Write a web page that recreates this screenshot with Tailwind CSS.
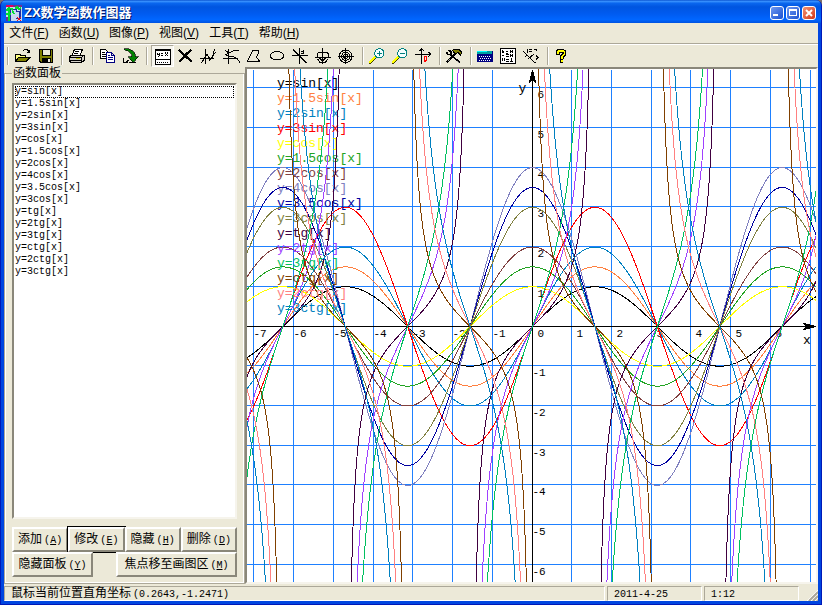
<!DOCTYPE html>
<html lang="zh-CN">
<head>
<meta charset="utf-8">
<title>ZX数学函数作图器</title>
<script src="https://cdn.jsdelivr.net/npm/@tailwindcss/browser@4"></script>
</head>
<body class="h-screen overflow-hidden bg-[#7b6f6a] text-black text-[12px] leading-[14px] font-['Liberation_Sans','Noto_Sans_CJK_SC',sans-serif]">
<div class="h-full flex flex-col bg-[#0046e0] rounded-t-[6px] overflow-hidden border-b border-r border-l border-[#0019b8]">

  <header class="h-[23px] shrink-0 flex items-center pl-[5px] pr-[5px] pt-[3px] bg-linear-[180deg,#0047c8_0%,#3d95ff_5%,#0a66ee_14%,#0055e0_30%,#005bf0_60%,#0066ff_85%,#0052e0_100%]">
    <svg class="w-4 h-4 shrink-0" viewBox="18 15 48 48" shape-rendering="crispEdges" aria-hidden="true">
      <path fill="#c8d8f0" d="M18 15h48v48H18z"/><path fill="#e00060" d="M18 15h21v6H18z"/><path fill="#703090" d="M39 15h27v6H39zM18 51h6v12h-6z"/>
      <path fill="none" stroke="#2030a0" stroke-width="3" d="M30 24v39M39 27h9v6h9v21h-9M60 21v36"/>
      <path fill="none" stroke="#00e030" stroke-width="5" d="M18 42h15M27 21v42M18 33l9-9 9 3 6 15M45 27l6-6 6 6 6-3"/>
      <path fill="none" stroke="#f01020" stroke-width="3" d="M51 51l12 12M63 51L51 63"/>
    </svg>
    <h1 class="flex-1 pl-[2px] text-white font-bold text-[13px] leading-4 [text-shadow:1px_1px_0_#00186b]">ZX数学函数作图器</h1>
    <div class="flex gap-[2px]">
      <button aria-label="最小化" class="w-[14px] h-[14px] rounded-[3px] border border-white bg-linear-to-br from-[#6f98f0] to-[#1a4fd0]"><svg viewBox="0 0 12 12" class="w-3 h-3"><path fill="#fff" d="M2 7h5v2H2z"/></svg></button>
      <button aria-label="最大化" class="w-[14px] h-[14px] rounded-[3px] border border-white bg-linear-to-br from-[#6f98f0] to-[#1a4fd0]"><svg viewBox="0 0 12 12" class="w-3 h-3" shape-rendering="crispEdges"><path fill="#fff" fill-rule="evenodd" d="M2 2h8v7H2zM3 4v4h6V4z"/></svg></button>
      <button aria-label="关闭" class="w-[14px] h-[14px] rounded-[3px] border border-white bg-linear-to-br from-[#f09070] to-[#d03010]"><svg viewBox="0 0 12 12" class="w-3 h-3"><path stroke="#fff" stroke-width="2" d="M3 3l6 6M9 3L3 9"/></svg></button>
    </div>
  </header>

  <div class="flex-1 min-h-0 flex flex-col mx-[3px] mb-[3px] bg-[#ece9d8]">
    <nav class="h-[20px] shrink-0 flex items-center">
      <button class="w-[50px] text-center">文件(<u>F</u>)</button>
      <button class="w-[50px] text-center">函数(<u>U</u>)</button>
      <button class="w-[50px] text-center">图像(<u>P</u>)</button>
      <button class="w-[50px] text-center">视图(<u>V</u>)</button>
      <button class="w-[50px] text-center">工具(<u>T</u>)</button>
      <button class="w-[50px] text-center">帮助(<u>H</u>)</button>
    </nav>
    <div class="h-[2px] shrink-0 bg-[#aca899] border-b border-white"></div>

    <div role="toolbar" aria-label="工具栏" class="h-[22px] shrink-0 flex items-center [&_button]:w-[23px] [&_button]:h-[22px] [&_button]:flex [&_button]:items-center [&_button]:justify-center [&_button]:shrink-0 [&_svg]:w-[19px] [&_svg]:h-[18px] [&_svg]:shrink-0 [&_hr]:w-[2px] [&_hr]:h-[18px] [&_hr]:ml-1 [&_hr]:mr-[2px] [&_hr]:border-0 [&_hr]:border-r [&_hr]:border-white [&_hr]:bg-[#aca899] [&_hr]:shrink-0">
      <hr class="first:ml-[3px]">
      <button aria-label="打开"><svg viewBox="39 141 57 54" shape-rendering="crispEdges"><path fill="#ffff80" stroke="#000" stroke-width="3" d="M46 183v-21h12l3 3h15v6"/><path fill="#808000" stroke="#000" stroke-width="3" d="M46 184l11-13h34l-12 13z"/><path fill="none" stroke="#000" stroke-width="3" d="M69 153l6-5h6l6 6v4M81 157h8v-7"/></svg></button>
      <button aria-label="保存"><svg viewBox="108 141 57 54" shape-rendering="crispEdges"><path fill="#808000" stroke="#000" stroke-width="3" d="M119 149h39v38h-36l-3-3z"/><path fill="#ece9d8" stroke="#000" stroke-width="3" d="M127 149h23v18h-23z"/><path d="M126 174h27v14h-27z"/><path fill="#ece9d8" d="M144 177h6v8h-6z"/></svg></button>
      <hr>
      <button aria-label="打印"><svg viewBox="201 141 57 54" shape-rendering="crispEdges"><path fill="#fff" stroke="#000" stroke-width="3" d="M216 168l7-19h24l-7 19z"/><path stroke="#000" stroke-width="3" d="M226 155h12M223 161h12"/><path fill="#d4d0c8" stroke="#000" stroke-width="3" d="M209 171l6-6h36l3 3v12l-9 7h-33l-3-4z"/><path fill="none" stroke="#000" stroke-width="3" d="M209 172h35v15M244 172l9-6M209 180h35"/><path fill="#c0c000" d="M228 174h12v4h-12z"/></svg></button>
      <hr>
      <button aria-label="复制"><svg viewBox="294 141 57 54" shape-rendering="crispEdges"><path fill="#fff" stroke="#000" stroke-width="3" d="M302 149h15l6 6v21h-21z"/><path stroke="#000" stroke-width="3" d="M306 158h9M306 164h12M306 170h12"/><path fill="#fff" stroke="#000080" stroke-width="3" d="M320 158h15l9 9v19h-24zM334 158v9h9"/><path stroke="#000080" stroke-width="3" d="M324 167h6M324 173h15M324 179h15"/></svg></button>
      <button aria-label="导出"><svg viewBox="363 141 57 54" shape-rendering="crispEdges"><path fill="#008000" stroke="#000" stroke-width="2" d="M371 146h12l14 5 8 10v9h11l-17 18-15-18h11v-6l-7-9-17-7z"/><path fill="none" stroke="#000" stroke-width="3" d="M370 174v14h8v-6M382 188v-7h6M387 188h21"/></svg></button>
      <hr>
      <span class="w-px shrink-0"></span>
      <button aria-label="函数面板" aria-pressed="true" class="bg-[#f6f5ee] border border-t-[#aca899] border-l-[#aca899] border-r-white border-b-white"><svg viewBox="460 141 57 54" shape-rendering="crispEdges"><path fill="#fff" stroke="#000" stroke-width="3" d="M467 150h45v43h-45z"/><path d="M465 147h48v6h-48zM465 177h48v3h-48z"/><path fill="none" stroke="#000" stroke-width="3" d="M472 158v5h6M479 158v8l-3 5M484 160h6M484 166h6M496 158l9 10M505 158l-9 10"/><path fill="none" stroke="#000" stroke-width="3" stroke-dasharray="3 3" d="M471 186h36"/></svg></button>
      <button aria-label="删除"><svg viewBox="528 141 57 54" shape-rendering="crispEdges"><path fill="none" stroke="#000" stroke-width="7" d="M537 149l15 15 12 11 11 10M574 150l-18 15-17 20"/></svg></button>
      <button aria-label="切线"><svg viewBox="597 141 57 54" shape-rendering="crispEdges"><path fill="none" stroke="#000" stroke-width="3" d="M600 175h42M616 146v46M603 190l9-12 9-15 5 9 6 6 6-6 5-24M626 184l21-28"/></svg></button>
      <button aria-label="法线"><svg viewBox="666 141 57 54" shape-rendering="crispEdges"><path fill="none" stroke="#000" stroke-width="3" d="M670 175h44M684 146v46M717 151h-15l-15 8-9 5 9 6h12l12 6 9 11M675 150l12 10"/></svg></button>
      <button aria-label="多边形"><svg viewBox="735 141 57 54" shape-rendering="crispEdges"><path fill="none" stroke="#000" stroke-width="3" d="M743 183l15-31h17v9l-6 10 9 12z"/></svg></button>
      <button aria-label="椭圆"><svg viewBox="804 141 57 54" shape-rendering="crispEdges"><ellipse cx="831" cy="167" rx="20" ry="13" fill="none" stroke="#000" stroke-width="3"/></svg></button>
      <button aria-label="极坐标线"><svg viewBox="3 141 57 54" shape-rendering="crispEdges"><path fill="none" stroke="#000" stroke-width="3" d="M6 166h48M29 145v47M9 148l41 41M34 155l7-3v9M34 161h6"/></svg></button>
      <button aria-label="极坐标"><svg viewBox="72 141 57 54" shape-rendering="crispEdges"><path fill="none" stroke="#000" stroke-width="3" d="M75 171h48M98 145v48M81 171v-9l6-6h23l6 6v9M83 177l6 9h18l6-9M89 174l6 6h6l6-6"/></svg></button>
      <button aria-label="极坐标网格"><svg viewBox="141 141 57 54" shape-rendering="crispEdges"><g fill="none" stroke="#000" stroke-width="3"><circle cx="167" cy="169" r="19"/><circle cx="167" cy="169" r="12"/><circle cx="167" cy="169" r="6"/><path d="M143 169h49M167 145v48"/></g></svg></button>
      <hr>
      <button aria-label="放大"><svg viewBox="234 141 57 54" shape-rendering="crispEdges"><path stroke="#404000" stroke-width="7" d="M237 191l21-20"/><path stroke="#ffff00" stroke-width="5" d="M237 189l20-20"/><circle cx="268" cy="160" r="14" fill="#f4ffff" stroke="#008080" stroke-width="3"/><path stroke="#008080" stroke-width="3" d="M261 160h15M268 153v15"/></svg></button>
      <button aria-label="缩小"><svg viewBox="303 141 57 54" shape-rendering="crispEdges"><path stroke="#404000" stroke-width="7" d="M306 191l21-20"/><path stroke="#ffff00" stroke-width="5" d="M306 189l20-20"/><circle cx="337" cy="160" r="14" fill="#f4ffff" stroke="#008080" stroke-width="3"/><path stroke="#008080" stroke-width="3" d="M330 160h15"/></svg></button>
      <button aria-label="原点"><svg viewBox="372 141 57 54" shape-rendering="crispEdges"><path fill="none" stroke="#000" stroke-width="3" d="M375 163h46M395 146v46M388 153l7-7 7 7M415 156l7 7-7 7"/><path fill="none" stroke="#f00" stroke-width="3" d="M402 170l3-2 3 2v12l-3 3-3-3z"/></svg></button>
      <hr>
      <button aria-label="工具"><svg viewBox="465 141 57 54" shape-rendering="crispEdges"><path stroke="#000" stroke-width="6" d="M470 188l12-12 20-21M480 162l29 26"/><path fill="none" stroke="#000" stroke-width="5" d="M470 155l3 8h9v-9l-7-3"/><path fill="#808000" stroke="#000" stroke-width="3" d="M488 151l6-3h12l9 9-3 8-9-8-6 6-6-6z"/><path stroke="#fff" stroke-width="2" d="M473 184l6-6M499 182l7 7"/></svg></button>
      <hr>
      <button aria-label="计算器"><svg viewBox="558 141 57 54" shape-rendering="crispEdges"><path fill="#000080" d="M561 153h48v33h-48z"/><path fill="#00a0a0" d="M561 153h45v9h-45z"/><path fill="#00ffff" d="M561 153h30v3h-30z"/><path fill="none" stroke="#fff" stroke-width="3" stroke-dasharray="3 3" d="M567 168h36M570 174h33M567 180h36"/></svg></button>
      <button aria-label="数值表"><svg viewBox="627 141 57 54" shape-rendering="crispEdges"><path fill="#fff" stroke="#000" stroke-width="3" d="M632 146h44v44h-44z"/><path fill="none" stroke="#000" stroke-width="3" d="M637 152l6 6M643 152l-6 6M648 153h6M648 159h6M660 152l9 7M669 152l-9 7M637 166h6M648 164h9M648 169h9M660 164l9 6M669 164l-9 6M637 175v9M642 175v9M648 177h9M648 183h9M663 174v12M660 185h9"/></svg></button>
      <button aria-label="求值"><svg viewBox="696 141 57 54" shape-rendering="crispEdges"><path fill="none" stroke="#000" stroke-width="3" d="M699 153l38 37M711 147v11M717 149h9M717 155h9M731 148h9v5M714 177l18-15M705 171l6-6M738 166l6 6-6 6v3"/></svg></button>
      <hr>
      <button aria-label="帮助"><svg viewBox="789 141 57 54" shape-rendering="crispEdges"><path fill="none" stroke="#000" stroke-width="11" d="M803 164v-9l4-3h12l4 3v8l-8 7v6M809 182h11"/><path fill="none" stroke="#ff0" stroke-width="5" d="M803 161v-6l4-3h12l4 3v8l-8 7v6M812 182h6"/></svg></button>
    </div>

    <main class="flex-1 min-h-0 flex">
      <fieldset class="w-[241px] shrink-0 min-w-0 flex flex-col border border-[#aca899] px-[7px] pb-[6px] shadow-[inset_-1px_-1px_0_#fff,inset_1px_0_0_#fff]">
        <legend class="px-px leading-3">函数面板</legend>
        <select size="16" aria-label="函数列表" class="flex-1 min-h-0 w-full mt-1 mb-2 block appearance-none overflow-hidden rounded-none bg-white border-2 border-t-[#8a877a] border-l-[#8a877a] border-r-[#f6f4ec] border-b-[#f6f4ec] outline-none p-px font-['Liberation_Mono',monospace] text-[10px] leading-3 [&_option]:block [&_option]:h-3 [&_option]:min-h-0 [&_option]:p-0 [&_option]:leading-3 [&_option]:text-[10px]">
          <option class="outline-1 outline-dotted outline-black -outline-offset-1">y=sin[x]</option><option>y=1.5sin[x]</option><option>y=2sin[x]</option><option>y=3sin[x]</option><option>y=cos[x]</option><option>y=1.5cos[x]</option><option>y=2cos[x]</option><option>y=4cos[x]</option><option>y=3.5cos[x]</option><option>y=3cos[x]</option><option>y=tg[x]</option><option>y=2tg[x]</option><option>y=3tg[x]</option><option>y=ctg[x]</option><option>y=2ctg[x]</option><option>y=3ctg[x]</option>
        </select>
        <div class="flex flex-col [&_button]:border-2 [&_button]:border-t-white [&_button]:border-l-white [&_button]:border-r-[#8a877a] [&_button]:border-b-[#8a877a] [&_button]:h-[25px] [&_button]:whitespace-nowrap [&_span]:font-['Liberation_Mono',monospace] [&_span]:text-[10px] [&_span]:ml-[2px]">
          <div class="grid grid-cols-4">
            <button>添加<span>(<u>A</u>)</span></button>
            <button class="outline-1 outline-black">修改<span>(<u>E</u>)</span></button>
            <button>隐藏<span>(<u>H</u>)</span></button>
            <button>删除<span>(<u>D</u>)</span></button>
          </div>
          <div class="flex justify-between">
            <button class="w-[81px]">隐藏面板<span>(<u>Y</u>)</span></button>
            <button class="w-[121px]">焦点移至画图区<span>(<u>M</u>)</span></button>
          </div>
        </div>
      </fieldset>
      <section aria-label="画图区" class="flex-1 min-w-0 border-2 border-t-[#8a877a] border-l-[#8a877a] border-r-[#f6f4ec] border-b-[#f6f4ec] bg-white">
        <svg id="plot" class="block w-full h-full overflow-hidden font-['Liberation_Mono',monospace]" shape-rendering="crispEdges"></svg>
      </section>
    </main>

    <footer class="h-[17px] shrink-0 flex items-stretch gap-[2px] pt-[2px] [&_p]:border [&_p]:border-t-[#aca899] [&_p]:border-l-[#aca899] [&_p]:border-r-white [&_p]:border-b-white [&_p]:pl-[6px] [&_p]:leading-[13px] [&_span]:font-['Liberation_Mono',monospace] [&_span]:text-[10px]">
      <p class="flex-1">鼠标当前位置直角坐标<span class="ml-[2px]">(0.2643,-1.2471)</span></p>
      <p class="w-[95px]"><span>2011-4-25</span></p>
      <p class="w-[95px]"><span>1:12</span></p>
      <svg class="w-[17px] h-[15px]" viewBox="0 0 17 15" aria-hidden="true"><path stroke="#fff" d="M6 15L17 4M10 15l7-7M14 15l3-3"/><path stroke="#aca899" stroke-width="2" d="M8 15l9-9M12 15l5-5M16 15l1-1"/></svg>
    </footer>
  </div>
</div>

<script>
const UNIT = 39.74;
const sin = Math.sin, cos = Math.cos, tan = Math.tan;
const curves = [
  ['y=sin[x]', '#000000', x => sin(x)],
  ['y=1.5sin[x]', '#ff8040', x => 1.5 * sin(x)],
  ['y=2sin[x]', '#0080c0', x => 2 * sin(x)],
  ['y=3sin[x]', '#ff0000', x => 3 * sin(x)],
  ['y=cos[x]', '#ffff00', x => cos(x)],
  ['y=1.5cos[x]', '#22a322', x => 1.5 * cos(x)],
  ['y=2cos[x]', '#804040', x => 2 * cos(x)],
  ['y=4cos[x]', '#8080c0', x => 4 * cos(x)],
  ['y=3.5cos[x]', '#0000a0', x => 3.5 * cos(x)],
  ['y=3cos[x]', '#808040', x => 3 * cos(x)],
  ['y=tg[x]', '#400040', x => tan(x)],
  ['y=2tg[x]', '#a040ff', x => 2 * tan(x)],
  ['y=3tg[x]', '#00c060', x => 3 * tan(x)],
  ['y=ctg[x]', '#804000', x => 1 / tan(x)],
  ['y=2ctg[x]', '#ff8080', x => 2 / tan(x)],
  ['y=3ctg[x]', '#0080c0', x => 3 / tan(x)]
];
const plot = document.getElementById('plot');

function draw() {
  const box = plot.getBoundingClientRect();
  const w = box.width, h = box.height;
  const cx = Math.ceil(w / 2) + 0.5, cy = Math.ceil(h / 2) + 0.5;
  const label = (x, y, s, size, color) => `<text x="${x}" y="${y}" font-size="${size}" fill="${color}">${s}</text>`;
  let grid = '', text = '', out = '';
  for (let k = -Math.floor(w / 2 / UNIT); k <= w / 2 / UNIT; k++) {
    const x = cx + Math.floor(k * UNIT);
    if (k) grid += `M${x} 1V${h}`;
    if (x < w - 12) text += label(x + (k < 0 ? 0 : 5), cy + 10, k, 11, '#000');
  }
  for (let k = -Math.floor(h / 2 / UNIT); k <= h / 2 / UNIT; k++) {
    if (!k) continue;
    const y = cy + Math.floor(-k * UNIT);
    grid += `M0 ${y}H${w}`;
    text += label(cx + (k < 0 ? 0 : 5), y + 10, k, 11, '#000');
  }
  out += `<path d="${grid}" stroke="#1e80ff" fill="none"/>`;
  out += `<path d="M0 ${cy}H${w}M${cx} 2V${h}" stroke="#000" fill="none"/>`;
  out += `<path d="M${w} ${cy}l-12 -3l3 3l-3 3zM${cx} 1l-3 12l3 -3l3 3z" fill="#000" stroke="#000"/>`;
  out += text + label(cx - 14, 23, 'y', 13, '#000') + label(w - 13, cy + 17, 'x', 13, '#000');
  curves.forEach(([name, color, f], i) => {
    let d = '', pen = false;
    for (let px = 0; px <= w; px += 0.5) {
      const v = f((px - cx) / UNIT);
      if (!(Math.abs(v) < 12)) { pen = false; continue; }
      d += (pen ? 'L' : 'M') + px + ' ' + (cy - v * UNIT).toFixed(2);
      pen = true;
    }
    out += `<path d="${d}" stroke="${color}" fill="none"/>` + label(30, 18 + 15 * i, name, 13, color);
  });
  plot.innerHTML = out;
}
new ResizeObserver(draw).observe(plot);
</script>
</body>
</html>
